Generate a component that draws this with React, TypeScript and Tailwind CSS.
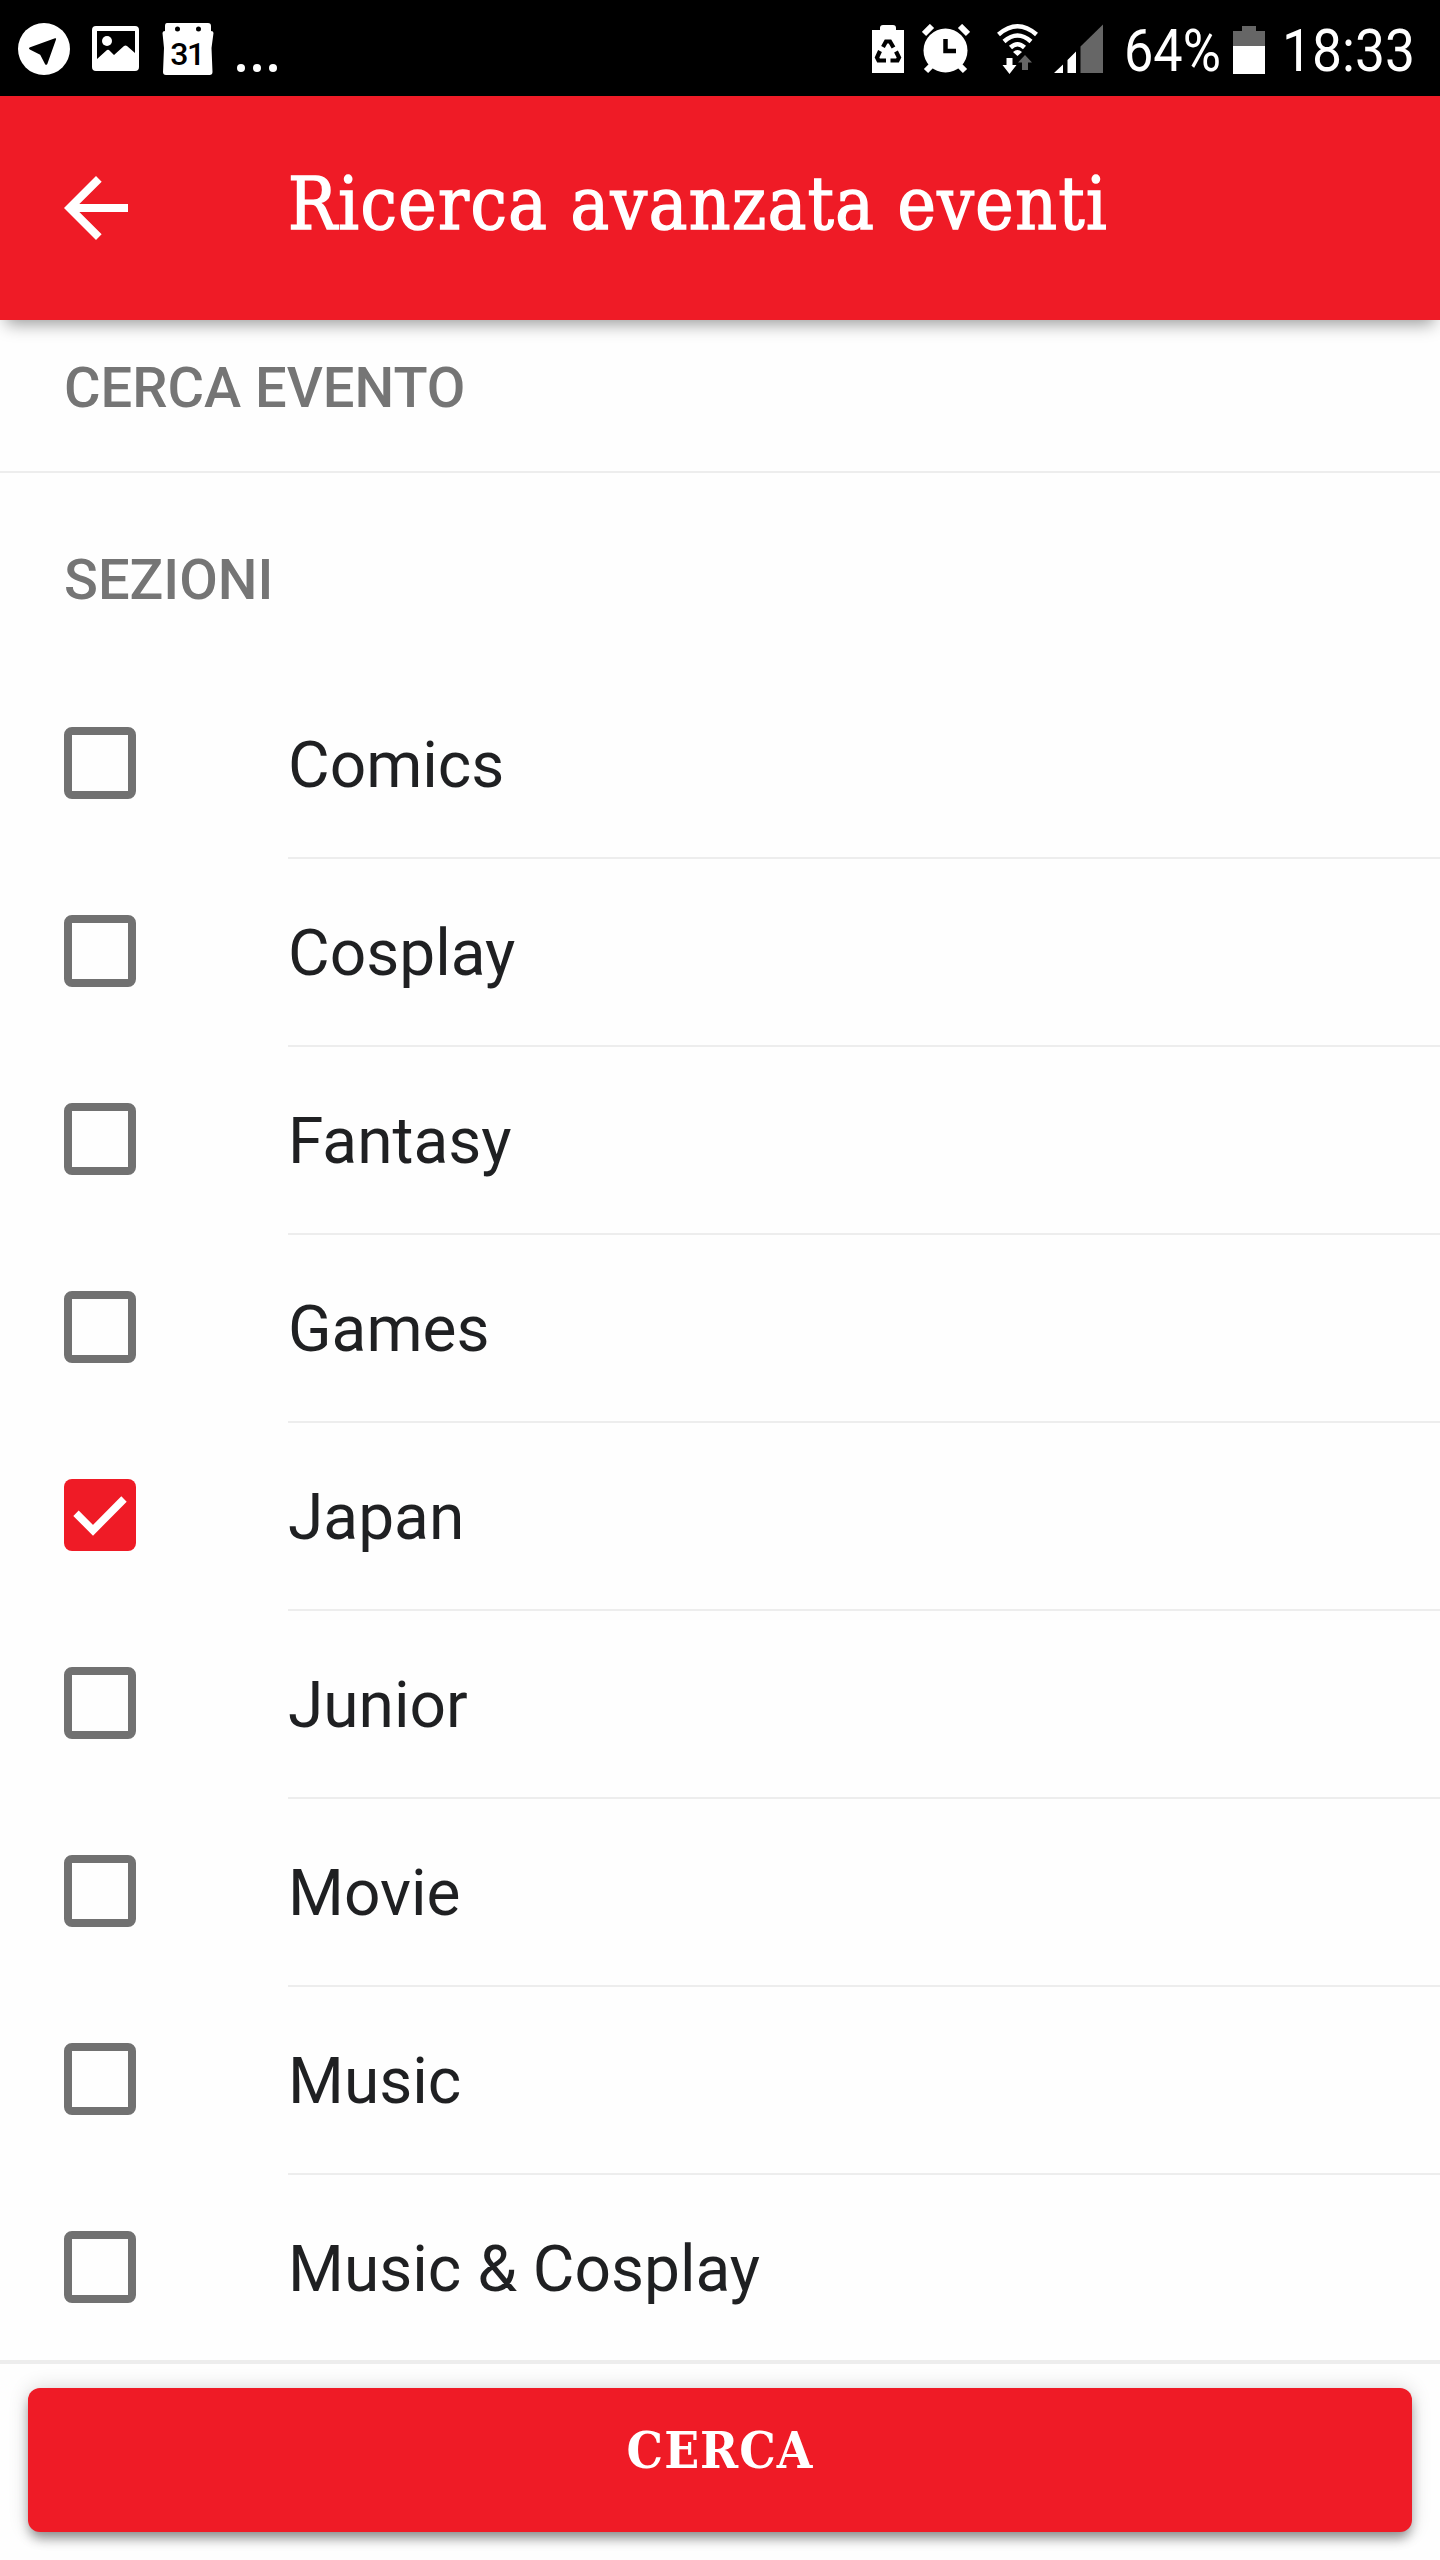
import { useState } from 'react';

const SECTIONS = ['Comics', 'Cosplay', 'Fantasy', 'Games', 'Japan', 'Junior', 'Movie', 'Music', 'Music & Cosplay'];

function StatusBar() {
  return (
    <div className="flex h-24 shrink-0 items-center bg-black pl-[18px] pr-[26px] pt-0.5 text-white">
      {/* Notifications */}
      <svg className="h-[52px] w-[52px]" viewBox="0 0 52 52" fill="currentColor">
        <circle cx="26" cy="26" r="26" />
        <path d="M11.5 24.5 37 15.2q1.5-.3 1 1.2L29.3 41q-1.3 1.7-2.3 0l-4.8-9.3-10.4-5.3q-1.5-1-.3-1.9z" fill="#000" />
      </svg>
      <svg className="ml-[22px] h-[52px] w-[48px]" viewBox="0 0 48 52" fill="currentColor">
        <path fillRule="evenodd" d="M4 3h39q4 0 4 4v37q0 4-4 4H4q-4 0-4-4V7q0-4 4-4zm1 5v28l10-9q1.500-.7 2.500.5l4.500 4.500 10-9q1.500-1 3 0l8 7V8z" />
        <circle cx="15" cy="18" r="5" />
      </svg>
      <svg className="ml-[22px] h-[52px] w-[52px]" viewBox="0 0 52 52" fill="currentColor">
        <path fillRule="evenodd" d="M5 0h41q3 0 3 3v5q2.500 0 2.500 2l-2 15 1 24q0 3-3 3H4q-3 0-3-3l1-24L.5 10q0-2 2.500-2V3q0-3 2-3zM15.500 3.500a2.500 2.500 0 1 0 0 5 2.500 2.500 0 0 0 0-5zm21 0a2.500 2.500 0 1 0 0 5 2.500 2.500 0 0 0 0-5z" />
        <text x="25" y="41.500" textAnchor="middle" fontFamily="Roboto, sans-serif" fontSize="32" fontWeight="500" letterSpacing="-1.5" fill="#000">31</text>
      </svg>
      <div className="ml-[23px] mt-[37px] flex gap-2">
        <i className="h-2 w-2 rounded-full bg-white" />
        <i className="h-2 w-2 rounded-full bg-white" />
        <i className="h-2 w-2 rounded-full bg-white" />
      </div>

      {/* System */}
      <svg className="ml-auto h-[50px] w-[32px]" viewBox="0 0 32 50" fill="currentColor">
        <path d="M11 1h10q3 0 3 3v2h8v43H0V6h8V4q0-3 3-3z" />
        <g fill="none" stroke="#000" strokeWidth="4.200">
          <path d="M11 23l3-5.500h4l3.500 6M8 27l-3 6.500 1.500 3H14M18.500 36.500h7l1.500-3-3-6" />
        </g>
      </svg>
      <svg className="ml-[18px] h-[50px] w-[48px]" viewBox="0 0 48 50">
        <path d="M2 10 10 2M38 2l8 8M10 41l-6 6M37 41l6 6" stroke="#fff" strokeWidth="6" />
        <circle cx="23.500" cy="26.500" r="22" fill="#fff" />
        <path d="M23.500 15v12H34" fill="none" stroke="#000" strokeWidth="4.500" />
      </svg>
      <svg className="ml-[26px] h-[52px] w-[44px]" viewBox="0 0 44 52">
        <g fill="none" stroke="#fff" strokeWidth="4.500">
          <path d="M2.500 11.500q19-16.500 38 0M8 18.500q13.500-12 27 0M14.500 24.500q7-6.500 14 0" />
        </g>
        <path d="M17 29q4.500-4 9 0l-4.500 4z" fill="#fff" />
        <path d="M10.500 35h6v7h4l-7 9-7-9h4z" fill="#fff" />
        <path d="M29 32l7 7.500h-4V47h-6v-7.500h-4z" fill="#666" />
      </svg>
      <svg className="ml-[14px] h-[50px] w-[50px]" viewBox="0 0 50 50">
        <path d="M0 49 9 40.500V49zM13.500 49V36L22 27.500V49z" fill="#fff" />
        <path d="M26.500 49V22.500L49 .5V49z" fill="#666" />
      </svg>
      <div className="ml-5 w-[99px] font-[Roboto,sans-serif] text-[60px] leading-[96px]">
        <span className="mt-1 block w-0 origin-left scale-x-[.87] whitespace-nowrap">64%</span>
      </div>
      <div className="ml-[10px] mt-px flex flex-col items-center">
        <div className="h-[5px] w-[14px] bg-[#666]" />
        <div className="h-[15px] w-8 bg-[#666]" />
        <div className="h-7 w-8 bg-white" />
      </div>
      <div className="ml-[17px] w-[132px] font-[Roboto,sans-serif] text-[60px] leading-[96px]">
        <span className="mt-1 block w-0 origin-left scale-x-[.89] whitespace-nowrap">18:33</span>
      </div>
    </div>
  );
}

function AppBar({ title }: { title: string }) {
  return (
    <header className="relative z-10 flex h-56 shrink-0 items-center bg-[#ef1b26] pl-12 text-white shadow-[0_10px_16px_-6px_rgba(0,0,0,0.4)]">
      <button aria-label="Indietro">
        <svg className="h-24 w-24" viewBox="0 0 24 24" fill="currentColor">
          <path d="M20 11H7.830l5.590-5.590L12 4l-8 8 8 8 1.410-1.410L7.830 13H20v-2z" />
        </svg>
      </button>
      <h1 className="ml-36 whitespace-nowrap pb-2 font-['DejaVu_Serif_Condensed','DejaVu_Serif',serif] text-[72px] leading-[96px] tracking-[1.5px] [-webkit-text-stroke:1.5px_white]">
        {title}
      </h1>
    </header>
  );
}

interface SectionRowProps {
  label: string;
  checked: boolean;
  onToggle: () => void;
}

function SectionRow({ label, checked, onToggle }: SectionRowProps) {
  return (
    <div className="flex h-[188px] shrink-0 cursor-pointer pl-16" onClick={onToggle}>
      <div
        className={`mt-14 h-[72px] w-[72px] rounded-lg ${checked ? 'bg-[#ef1b26]' : 'border-8 border-[#717171]'}`}
        role="checkbox"
        aria-checked={checked}
      >
        {checked && (
          <svg viewBox="0 0 72 72" fill="none" stroke="#fff" strokeWidth="7.600">
            <path d="M12 34.300 29 51.300 60 20" />
          </svg>
        )}
      </div>
      <div className="ml-[152px] flex flex-1 items-center border-b-2 border-[#ededed] pt-[3px] text-[64px] text-[#1f2022]">
        {label}
      </div>
    </div>
  );
}

export default function App() {
  const [selected, setSelected] = useState<string[]>(['Japan']);

  const toggle = (name: string) => {
    setSelected((prev) => (prev.includes(name) ? prev.filter((s) => s !== name) : [...prev, name]));
  };

  return (
    <div className="flex h-[2560px] w-[1440px] flex-col overflow-hidden bg-[#fefefe] font-[Roboto,sans-serif]">
      <StatusBar />
      <AppBar title="Ricerca avanzata eventi" />

      <main className="flex h-[2040px] shrink-0 flex-col overflow-hidden">
        <h2 className="h-[153px] shrink-0 border-b-2 border-[#ededed] pl-16 pt-9 text-[56px] font-medium leading-[64px] text-[#757575]">
          CERCA EVENTO
        </h2>
        <h2 className="h-[198px] shrink-0 pl-16 pt-[75px] text-[56px] font-medium leading-[64px] text-[#757575]">
          SEZIONI
        </h2>
        {SECTIONS.map((name) => (
          <SectionRow key={name} label={name} checked={selected.includes(name)} onToggle={() => toggle(name)} />
        ))}
      </main>

      <footer className="h-[200px] shrink-0 border-t-4 border-[#ededed] px-7 pt-6">
        <button className="flex h-36 w-full items-center justify-center rounded-xl bg-[#ef1b26] pb-5 font-['DejaVu_Serif_Condensed','DejaVu_Serif',serif] text-[51px] font-bold tracking-[1px] text-white shadow-[0_8px_12px_-2px_rgba(0,0,0,0.4),0_0_20px_rgba(0,0,0,0.16)]">
          CERCA
        </button>
      </footer>
    </div>
  );
}
